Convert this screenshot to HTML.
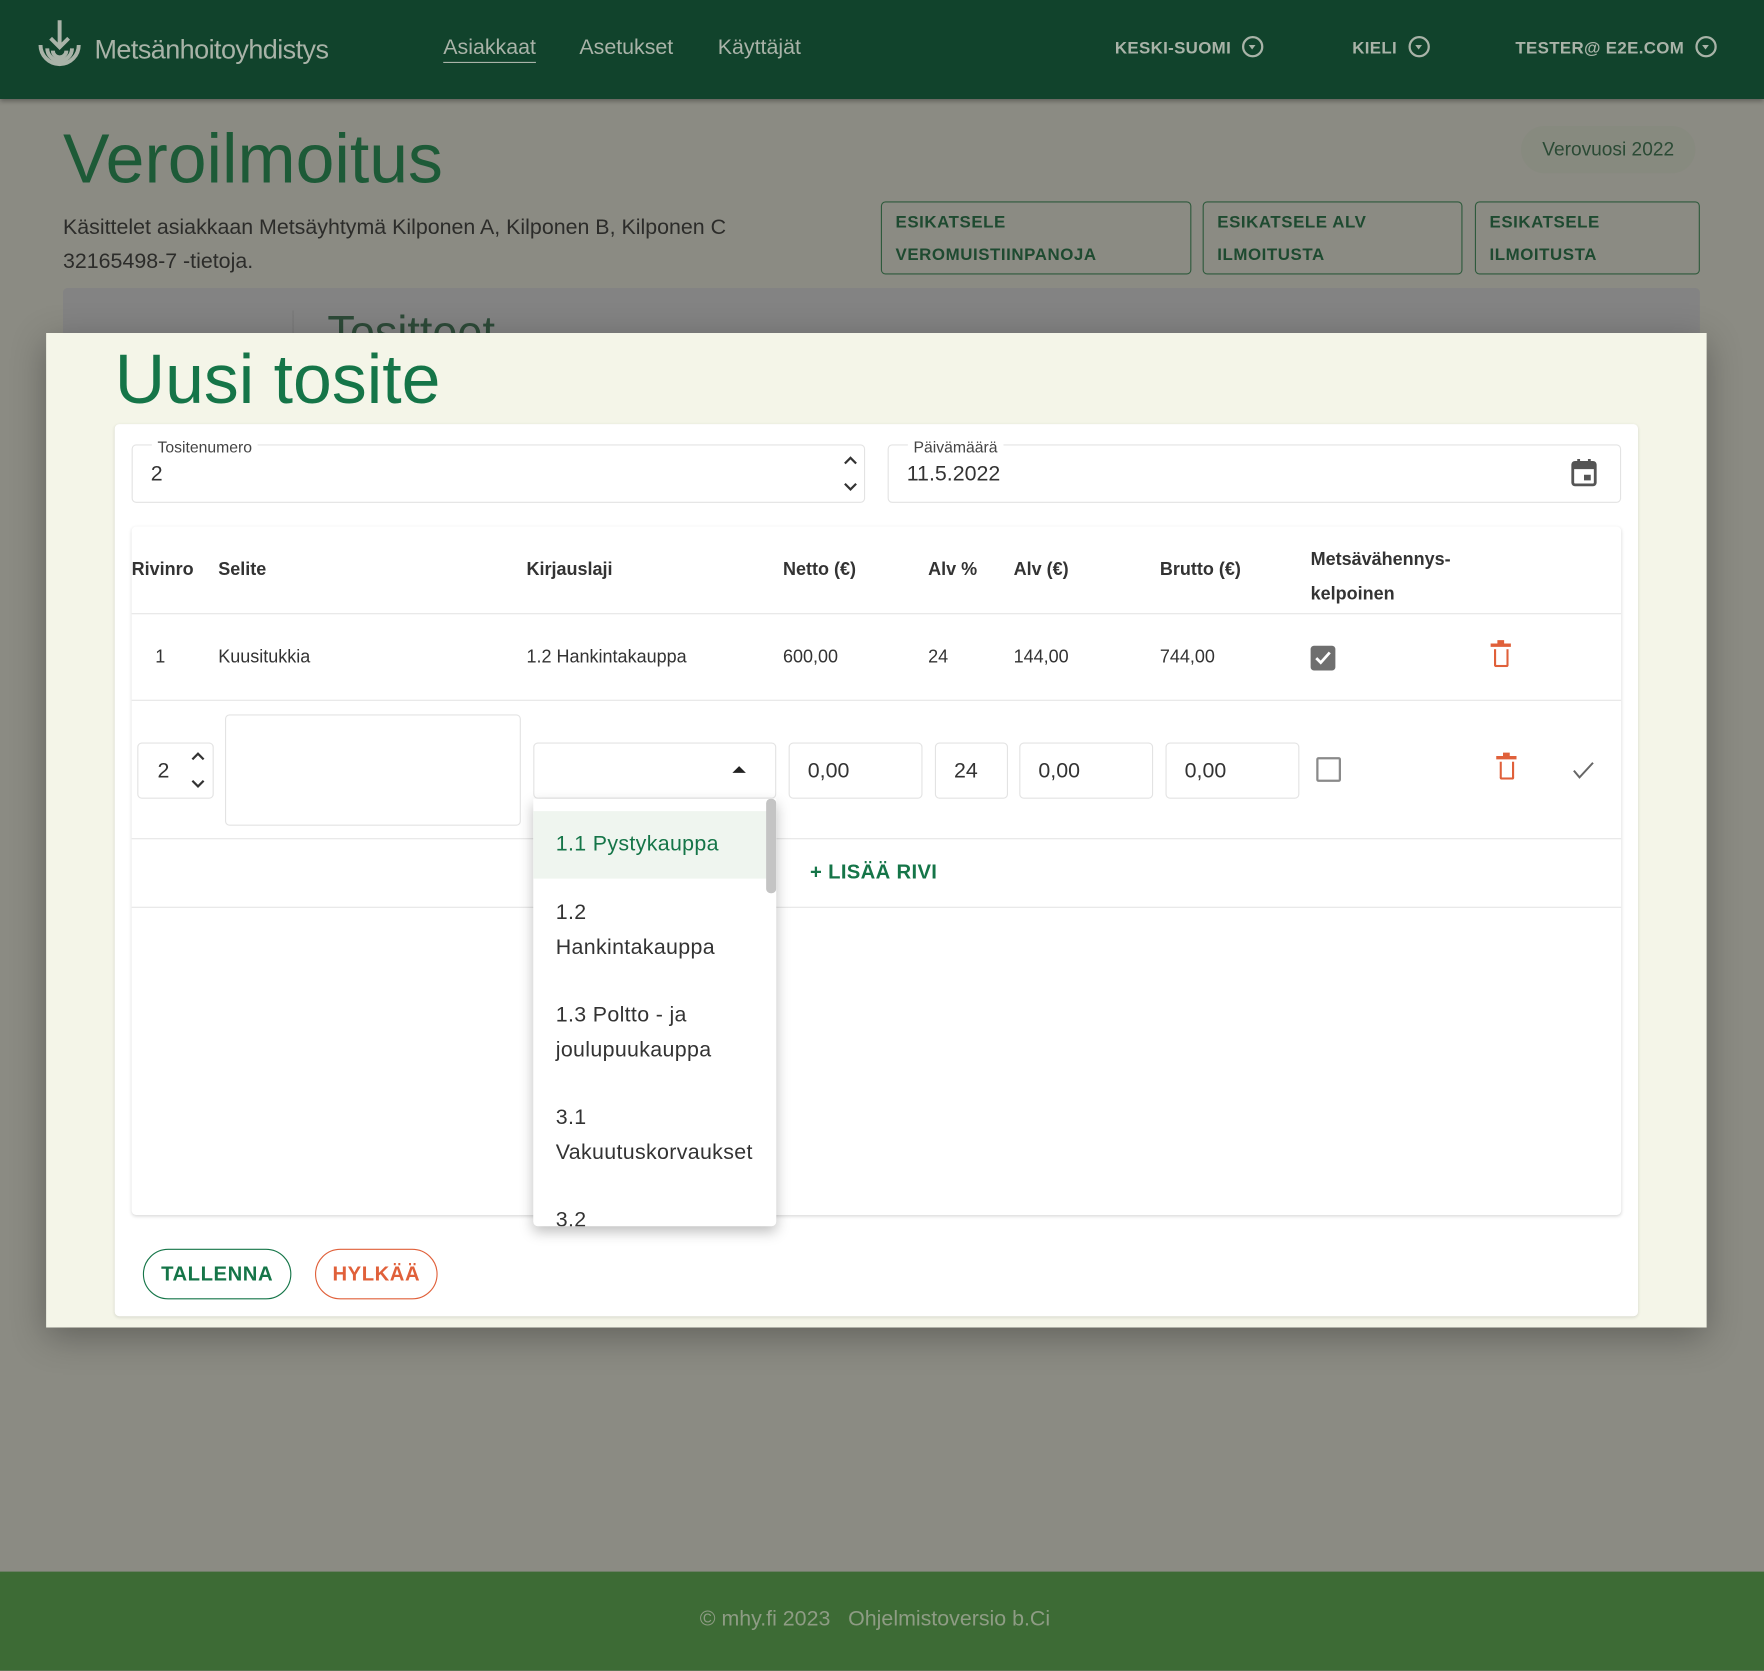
<!DOCTYPE html>
<html><head><meta charset="utf-8">
<style>
html,body{margin:0;padding:0;width:1764px;height:1671px;overflow:hidden;background:#8b8b83;font-family:"Liberation Sans",sans-serif;}
#w{position:absolute;left:0;top:0;width:1568px;height:1485px;transform:scale(1.125);transform-origin:0 0;background:#8b8b83;}
.a{position:absolute;}
.hd{left:0;top:0;width:1568px;height:88px;background:#11432c;box-shadow:0 2px 4px rgba(0,0,0,.3);}
.nav{color:#a9b3a8;font-size:19px;top:32px;}
.nr{color:#a9b3a8;font-size:15px;font-weight:bold;top:34px;letter-spacing:.3px;}
.ci{display:inline-block;width:15px;height:15px;border:2px solid #a9b3a8;border-radius:50%;vertical-align:middle;margin-left:10px;position:relative;top:-2px;}
.ci:after{content:"";position:absolute;left:4px;top:6px;border:3.5px solid transparent;border-top:4px solid #a9b3a8;}
.btn{border:1px solid #2e5a3c;border-radius:4px;color:#1e4a30;font-weight:bold;font-size:15px;line-height:29px;padding:3px 12px;box-sizing:border-box;letter-spacing:.5px;}
.modal{left:41px;top:296px;width:1476px;height:884px;background:#f4f5e8;box-shadow:0 8px 30px rgba(0,0,0,.3);}
.card{left:102px;top:377px;width:1354px;height:793px;background:#fff;border-radius:4px;box-shadow:0 1px 3px rgba(0,0,0,.12);}
.th{font-weight:bold;font-size:16px;color:#333;}
.td{font-size:16px;color:#333;}
.inp{border:1px solid #e3e3e3;border-radius:4px;background:#fff;box-sizing:border-box;font-size:19px;color:#333;padding-left:16px;}
.dd{font-size:19px;color:#333;left:494px;line-height:31px;letter-spacing:.3px;}
.trash{width:13px;height:16px;border:2.5px solid #e0603a;border-top:none;border-radius:0 0 2px 2px;box-sizing:border-box;}
.trash:before{content:"";position:absolute;left:-5px;top:-5px;width:18px;height:2.5px;background:#e0603a;}
.trash:after{content:"";position:absolute;left:1px;top:-8px;width:6px;height:2.5px;background:#e0603a;}
</style></head><body><div id="w">
<div class="a hd"></div>
<svg class="a" style="left:30px;top:16px" width="46" height="54" viewBox="0 0 46 54"><g fill="none" stroke="#a9b3a8" stroke-width="3.5"><path d="M23 2v24M15 18l8 8 8-8"/><path d="M6 24a17 17 0 1 0 34 0"/><path d="M12 27a11 11 0 0 0 22 0"/><path d="M17 29a6 6 0 0 0 12 0"/></g></svg>
<div class="a" style="left:84px;top:31px;color:#a9b3a8;font-size:24px;letter-spacing:-.5px">Metsänhoitoyhdistys</div>
<div class="a nav" style="left:394px;text-decoration:underline;text-decoration-thickness:1px;text-underline-offset:7px">Asiakkaat</div>
<div class="a nav" style="left:515px">Asetukset</div>
<div class="a nav" style="left:638px">Käyttäjät</div>
<div class="a nr" style="left:991px">KESKI-SUOMI<span class="ci"></span></div>
<div class="a nr" style="left:1202px">KIELI<span class="ci"></span></div>
<div class="a nr" style="left:1347px">TESTER@ E2E.COM<span class="ci"></span></div>

<div class="a" style="left:56px;top:106px;font-size:62px;color:#1d5a37">Veroilmoitus</div>
<div class="a" style="left:1352px;top:112px;width:155px;height:42px;border-radius:21px;background:#878a7f;color:#2b4a35;font-size:17px;text-align:center;line-height:42px">Verovuosi 2022</div>
<div class="a" style="left:56px;top:188px;font-size:19px;color:#2c2c2a;line-height:30px">Käsittelet asiakkaan Metsäyhtymä Kilponen A, Kilponen B, Kilponen C<br>32165498-7 -tietoja.</div>
<div class="a btn" style="left:783px;top:179px;width:276px;height:65px">ESIKATSELE<br>VEROMUISTIINPANOJA</div>
<div class="a btn" style="left:1069px;top:179px;width:231px;height:65px">ESIKATSELE ALV<br>ILMOITUSTA</div>
<div class="a btn" style="left:1311px;top:179px;width:200px;height:65px">ESIKATSELE<br>ILMOITUSTA</div>
<div class="a" style="left:56px;top:256px;width:1455px;height:60px;background:#838383;border-radius:4px"></div>
<div class="a" style="left:260px;top:276px;width:1px;height:30px;background:#777"></div>
<div class="a" style="left:291px;top:274px;font-size:40px;color:#2d4a38">Tositteet</div>

<div class="a modal"></div>
<div class="a" style="left:102px;top:302px;font-size:62px;color:#157548">Uusi tosite</div>
<div class="a card"></div>
<div class="a inp" style="left:117px;top:395px;width:652px;height:52px;line-height:52px">2</div>
<div class="a" style="left:135px;top:389px;background:#fff;padding:0 5px;font-size:14px;color:#444">Tositenumero</div>
<svg class="a" style="left:748px;top:400px" width="16" height="42"><path d="M3 12l5-5 5 5M3 30l5 5 5-5" stroke="#333" stroke-width="2" fill="none"/></svg>
<div class="a inp" style="left:789px;top:395px;width:652px;height:52px;line-height:52px">11.5.2022</div>
<div class="a" style="left:807px;top:389px;background:#fff;padding:0 5px;font-size:14px;color:#444">Päivämäärä</div>
<svg class="a" style="left:1396px;top:407px" width="24" height="26" viewBox="0 0 24 26"><rect x="2" y="4" width="20" height="20" rx="2" fill="none" stroke="#555" stroke-width="2.5"/><rect x="2" y="4" width="20" height="6" fill="#555"/><rect x="6" y="1" width="2.5" height="5" fill="#555"/><rect x="15.5" y="1" width="2.5" height="5" fill="#555"/><rect x="12" y="15" width="6" height="5" fill="#555"/></svg>

<div class="a" style="left:117px;top:468px;width:1324px;height:612px;background:#fff;box-shadow:0 1px 3px rgba(0,0,0,.15);border-radius:4px"></div>
<div class="a th" style="left:117px;top:498px">Rivinro</div>
<div class="a th" style="left:194px;top:498px">Selite</div>
<div class="a th" style="left:468px;top:498px">Kirjauslaji</div>
<div class="a th" style="left:696px;top:498px">Netto (€)</div>
<div class="a th" style="left:825px;top:498px">Alv %</div>
<div class="a th" style="left:901px;top:498px">Alv (€)</div>
<div class="a th" style="left:1031px;top:498px">Brutto (€)</div>
<div class="a th" style="left:1165px;top:482px;line-height:31px">Metsävähennys-<br>kelpoinen</div>
<div class="a" style="left:117px;top:545px;width:1324px;height:1px;background:#e6e6e6"></div>
<div class="a td" style="left:138px;top:576px">1</div>
<div class="a td" style="left:194px;top:576px">Kuusitukkia</div>
<div class="a td" style="left:468px;top:576px">1.2 Hankintakauppa</div>
<div class="a td" style="left:696px;top:576px">600,00</div>
<div class="a td" style="left:825px;top:576px">24</div>
<div class="a td" style="left:901px;top:576px">144,00</div>
<div class="a td" style="left:1031px;top:576px">744,00</div>
<div class="a" style="left:1165px;top:574px;width:22px;height:22px;background:#6f6f6f;border-radius:3px"></div>
<svg class="a" style="left:1165px;top:574px" width="22" height="22"><path d="M5 11l4 4 8-9" stroke="#fff" stroke-width="2.5" fill="none"/></svg>
<div class="a trash" style="left:1328px;top:577px"></div>
<div class="a" style="left:117px;top:622px;width:1324px;height:1px;background:#e6e6e6"></div>

<div class="a inp" style="left:122px;top:660px;width:68px;height:50px;line-height:50px;padding-left:17px">2</div>
<svg class="a" style="left:168px;top:662px" width="16" height="44"><path d="M3 13l5-5 5 5M3 32l5 5 5-5" stroke="#333" stroke-width="2" fill="none"/></svg>
<div class="a inp" style="left:200px;top:635px;width:263px;height:99px"></div>
<div class="a inp" style="left:474px;top:660px;width:216px;height:50px"></div>
<div class="a" style="left:651px;top:681px;border:6px solid transparent;border-bottom:6px solid #222;border-top:none"></div>
<div class="a inp" style="left:701px;top:660px;width:119px;height:50px;line-height:50px">0,00</div>
<div class="a inp" style="left:831px;top:660px;width:65px;height:50px;line-height:50px">24</div>
<div class="a inp" style="left:906px;top:660px;width:119px;height:50px;line-height:50px">0,00</div>
<div class="a inp" style="left:1036px;top:660px;width:119px;height:50px;line-height:50px">0,00</div>
<div class="a" style="left:1170px;top:673px;width:22px;height:22px;border:2px solid #8a8a8a;border-radius:2px;box-sizing:border-box"></div>
<div class="a trash" style="left:1333px;top:677px"></div>
<svg class="a" style="left:1398px;top:676px" width="20" height="18"><path d="M1 9l5 6 12-13" stroke="#666" stroke-width="1.8" fill="none"/></svg>
<div class="a" style="left:117px;top:745px;width:1324px;height:1px;background:#e6e6e6"></div>
<div class="a" style="left:720px;top:765px;font-size:18px;font-weight:bold;color:#157548;letter-spacing:.3px">+ LISÄÄ RIVI</div>
<div class="a" style="left:117px;top:806px;width:1324px;height:1px;background:#e6e6e6"></div>

<div class="a" style="left:474px;top:710px;width:216px;height:380px;background:#fff;box-shadow:0 5px 12px rgba(0,0,0,.25);border-radius:0 0 4px 4px;overflow:hidden">
<div class="a" style="left:0;top:11px;width:216px;height:60px;background:#eff5ef"></div>
<div class="a" style="left:207px;top:0;width:9px;height:84px;background:#c4c4c4;border-radius:4px"></div>
</div>
<div class="a dd" style="top:735px;color:#157548">1.1 Pystykauppa</div>
<div class="a dd" style="top:796px">1.2<br>Hankintakauppa</div>
<div class="a dd" style="top:887px">1.3 Poltto - ja<br>joulupuukauppa</div>
<div class="a dd" style="top:978px">3.1<br>Vakuutuskorvaukset</div>
<div class="a" style="left:474px;top:1070px;width:216px;height:20px;overflow:hidden"><div class="a dd" style="left:20px;top:-1px">3.2</div></div>

<div class="a" style="left:127px;top:1110px;width:132px;height:45px;border:1.5px solid #157548;border-radius:23px;box-sizing:border-box;color:#157548;font-weight:bold;font-size:18px;text-align:center;line-height:42px;letter-spacing:.5px">TALLENNA</div>
<div class="a" style="left:280px;top:1110px;width:109px;height:45px;border:1.5px solid #e0603a;border-radius:23px;box-sizing:border-box;color:#e0603a;font-weight:bold;font-size:18px;text-align:center;line-height:42px;letter-spacing:.5px">HYLKÄÄ</div>

<div class="a" style="left:0;top:1397px;width:1568px;height:88px;background:#3d6b35"></div>
<div class="a" style="left:622px;top:1429px;font-size:19px;color:#8e9c84">© mhy.fi 2023&nbsp;&nbsp;&nbsp;Ohjelmistoversio b.Ci</div>
</div></body></html>
